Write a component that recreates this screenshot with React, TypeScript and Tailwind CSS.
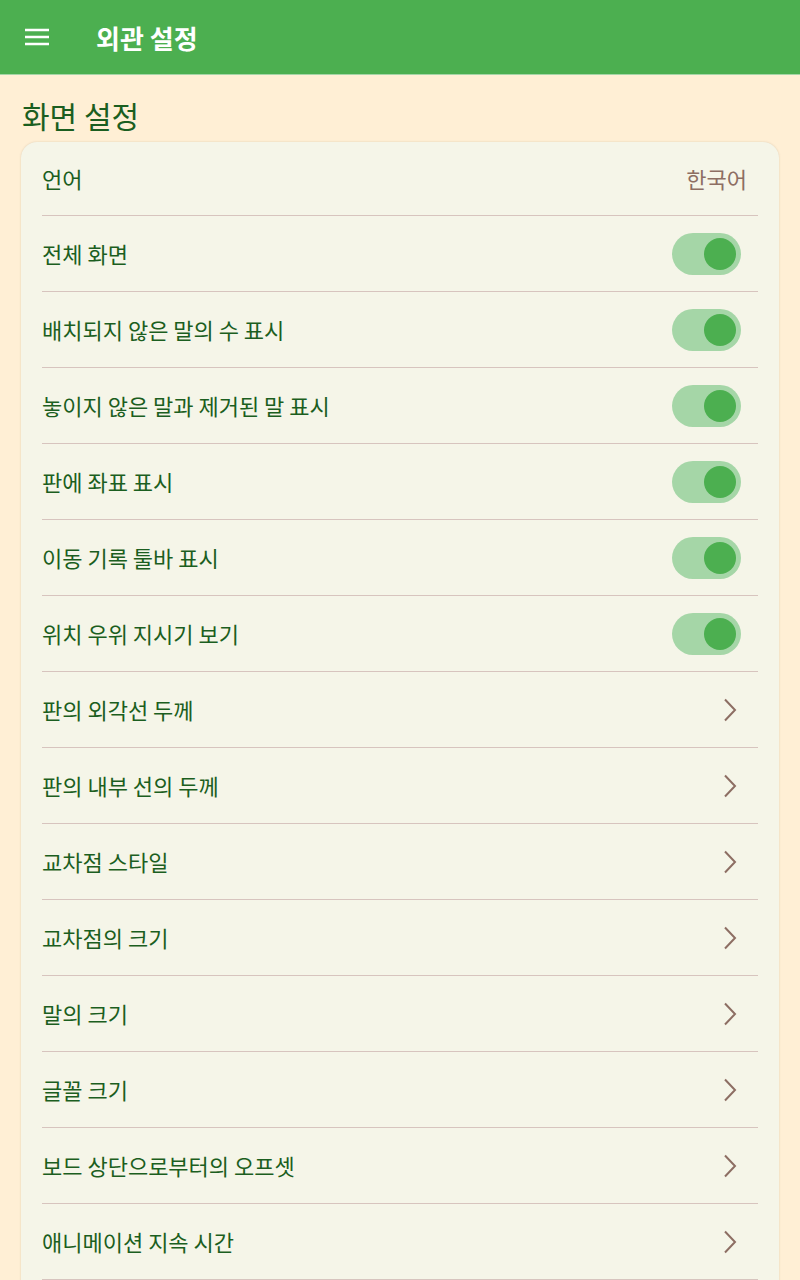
// Appearance settings screen: green app bar, section title and a card of settings rows.
const FONT = { fontFamily: '"Noto Sans CJK KR", "Roboto", sans-serif' };

type Row =
  | { label: string; kind: 'value'; value: string }
  | { label: string; kind: 'toggle' }
  | { label: string; kind: 'link' };

const ROWS: Row[] = [
  { label: '언어', kind: 'value', value: '한국어' },
  { label: '전체 화면', kind: 'toggle' },
  { label: '배치되지 않은 말의 수 표시', kind: 'toggle' },
  { label: '놓이지 않은 말과 제거된 말 표시', kind: 'toggle' },
  { label: '판에 좌표 표시', kind: 'toggle' },
  { label: '이동 기록 툴바 표시', kind: 'toggle' },
  { label: '위치 우위 지시기 보기', kind: 'toggle' },
  { label: '판의 외각선 두께', kind: 'link' },
  { label: '판의 내부 선의 두께', kind: 'link' },
  { label: '교차점 스타일', kind: 'link' },
  { label: '교차점의 크기', kind: 'link' },
  { label: '말의 크기', kind: 'link' },
  { label: '글꼴 크기', kind: 'link' },
  { label: '보드 상단으로부터의 오프셋', kind: 'link' },
  { label: '애니메이션 지속 시간', kind: 'link' },
];

function Toggle() {
  return (
    <div className="w-[69px] h-[42px] rounded-full bg-[#a5d6a7] flex items-center justify-end pr-[5px]">
      <div className="w-[32px] h-[32px] rounded-full bg-[#4caf50]" />
    </div>
  );
}

function Chevron() {
  return (
    <svg width="16" height="24" viewBox="0 0 16 24" fill="none" className="mr-[20px]">
      <path d="M3 1.5l10 10.5-10 10.5" stroke="#8d6e63" strokeWidth="2" />
    </svg>
  );
}

export default function App() {
  return (
    <div className="min-h-screen bg-[#ffefd5] overflow-hidden" style={FONT}>
      <header className="h-[75px] bg-[#4caf50] border-b border-[#a5d6a7] flex items-center">
        <svg width="26" height="20" viewBox="0 0 26 20" className="ml-[24px]">
          <path d="M1 3h24M1 10h24M1 17h24" stroke="#fff" strokeWidth="2.4" />
        </svg>
        <h1 className="ml-[46px] text-white text-[26px] font-bold">외관 설정</h1>
      </header>

      <main className="px-[21px] pb-8">
        <h2 className="pt-[21px] pb-[8px] pl-px text-[30px] leading-[38px] text-[#1b5e20]">화면 설정</h2>
        {/* the card runs on below the fold, so its lower corners stay out of view */}
        <div className="rounded-[16px] bg-[#f5f5e8] shadow-[0_0_2px_rgba(120,90,60,0.25)] px-[21px] pb-[24px]">
          {ROWS.map((r, i) => (
            <div
              key={r.label}
              className={
                'flex items-center justify-between border-b border-[#d7c4be] ' +
                (i === 0 ? 'h-[74px]' : 'h-[76px]')
              }
            >
              <span className="text-[22px] text-[#1b5e20]">{r.label}</span>
              {r.kind === 'value' && <span className="text-[22px] text-[#8d6e63] mr-[11px]">{r.value}</span>}
              {r.kind === 'toggle' && <div className="mr-[17px]"><Toggle /></div>}
              {r.kind === 'link' && <Chevron />}
            </div>
          ))}
        </div>
      </main>
    </div>
  );
}
